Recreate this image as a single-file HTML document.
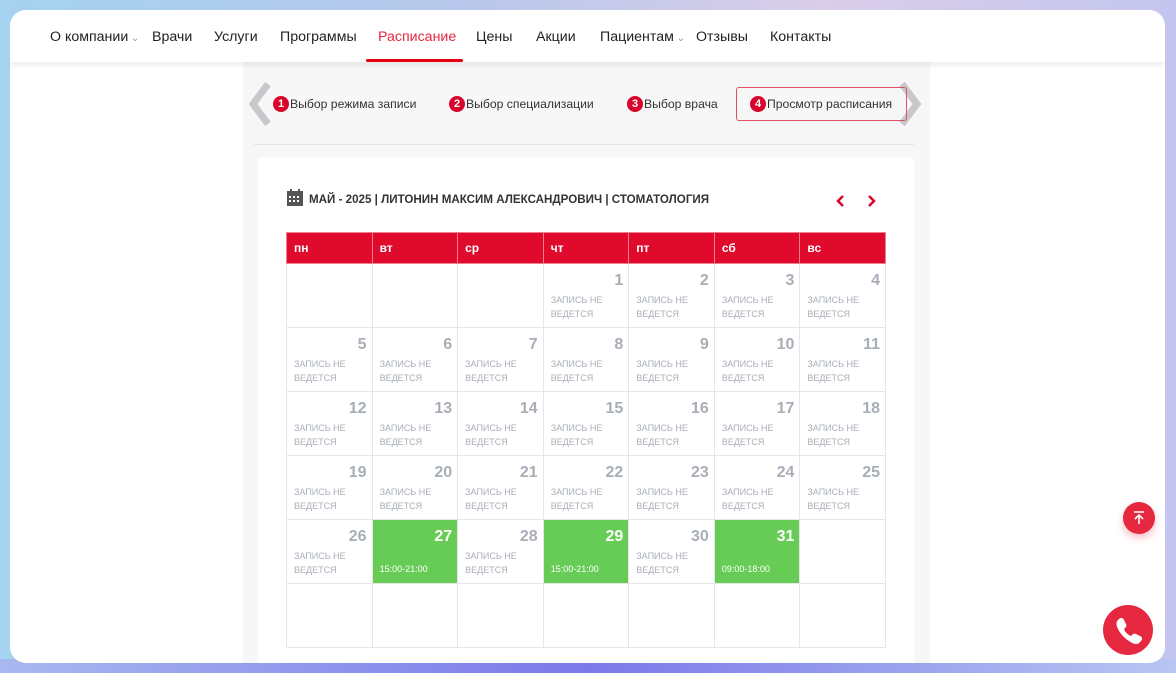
<!DOCTYPE html>
<html><head><meta charset="utf-8"><style>
*{margin:0;padding:0;box-sizing:border-box}
body{width:1176px;height:673px;overflow:hidden;font-family:"Liberation Sans",sans-serif;background:linear-gradient(90deg,#a5d3f0 0%,#b9c8ec 40%,#d9cde8 70%,#c4c6ef 100%);position:relative}
.bot{position:absolute;left:0;right:0;bottom:0;height:14px;background:linear-gradient(90deg,#a9b8f0,#7b78ea 50%,#b8c6f2)}
.frame{position:absolute;left:10px;top:10px;width:1155px;height:653px;background:#fff;border-radius:16px;overflow:hidden}
.nav{position:absolute;left:0;top:0;width:100%;height:52px;background:#fff;box-shadow:0 3px 6px rgba(0,0,0,.08);z-index:2}
.nav span{position:absolute;top:19px;font-size:14.2px;color:#222}
.nav .act{color:#e6283f}
.ul{position:absolute;left:356px;top:49px;width:97px;height:3px;background:#e60012;border-radius:2px}
.gray{position:absolute;left:233px;top:52px;width:687px;height:620px;background:#f7f7f7}
.card{position:absolute;left:248px;top:147px;width:656px;height:520px;background:#fff;border-radius:4px}
.sep{position:absolute;left:244px;top:134px;width:660px;height:1px;background:#e4e4e4}
.step{position:absolute;top:86px;font-size:12.2px;color:#333;line-height:16px}
.num{display:inline-block;width:16px;height:16px;border-radius:50%;background:#d9042b;color:#fff;font-size:11px;font-weight:bold;text-align:center;line-height:16px;margin-right:1px;vertical-align:top}
.box{position:absolute;left:726px;top:77px;width:171px;height:34px;border:1px solid #e05060;border-radius:3px}
table{position:absolute;left:276px;top:222px;border-collapse:collapse;width:600px;table-layout:fixed}
th{background:#df0a2c;color:#fff;height:31px;text-align:left;padding-left:7px;font-size:12px;border:1px solid #f08090}
td{height:64px;border:1px solid #e6e6e6;vertical-align:top;position:relative}
td b{position:absolute;right:5px;top:8px;font-size:16px;color:#a8aeb8}
td i{position:absolute;left:7px;top:30px;font-style:normal;font-size:9px;line-height:13.5px;color:#a8aeb8}
td.g{background:#66cc55}
td.g b{color:#fff}
td.g i{color:#fff;top:43px}
</style></head><body>
<div class="bot"></div>
<div class="frame">
<div class="nav">
<span style="left:40px">О компании<small style="color:#999;font-size:10px"> ⌄</small></span>
<span style="left:142px">Врачи</span>
<span style="left:204px">Услуги</span>
<span style="left:270px">Программы</span>
<span style="left:368px" class="act">Расписание</span>
<span style="left:466px">Цены</span>
<span style="left:526px">Акции</span>
<span style="left:590px">Пациентам<small style="color:#999;font-size:10px"> ⌄</small></span>
<span style="left:686px">Отзывы</span>
<span style="left:760px">Контакты</span>
<div class="ul"></div>
</div>
<div class="gray"></div>
<svg style="position:absolute;left:236px;top:70px" width="30" height="48"><path d="M22 4 L7 24 L22 44" fill="none" stroke="#c8c8cc" stroke-width="7"/></svg>
<svg style="position:absolute;left:884px;top:70px" width="30" height="48"><path d="M8 4 L23 24 L8 44" fill="none" stroke="#c8c8cc" stroke-width="7"/></svg>
<div class="box"></div>
<div class="step" style="left:263px"><span class="num">1</span>Выбор режима записи</div>
<div class="step" style="left:439px"><span class="num">2</span>Выбор специализации</div>
<div class="step" style="left:617px"><span class="num">3</span>Выбор врача</div>
<div class="step" style="left:740px"><span class="num">4</span>Просмотр расписания</div>
<div class="sep"></div>
<div class="card"></div>
<svg style="position:absolute;left:276px;top:179px" width="18" height="18"><rect x="1" y="2" width="16" height="15" fill="#555"/><rect x="4" y="0" width="2" height="4" fill="#555"/><rect x="12" y="0" width="2" height="4" fill="#555"/><g fill="#fff"><rect x="3" y="7" width="2" height="2"/><rect x="7" y="7" width="2" height="2"/><rect x="11" y="7" width="2" height="2"/><rect x="3" y="11" width="2" height="2"/><rect x="7" y="11" width="2" height="2"/><rect x="11" y="11" width="2" height="2"/></g></svg>
<div style="position:absolute;left:299px;top:183px;font-size:11.6px;font-weight:bold;color:#333">МАЙ - 2025 | ЛИТОНИН МАКСИМ АЛЕКСАНДРОВИЧ | СТОМАТОЛОГИЯ</div>
<svg style="position:absolute;left:825px;top:184px" width="50" height="14"><path d="M8 2 L3 7 L8 12 M34 2 L39 7 L34 12" fill="none" stroke="#d9042b" stroke-width="2.5"/></svg>
<table>
<tr><th>пн</th><th>вт</th><th>ср</th><th>чт</th><th>пт</th><th>сб</th><th>вс</th></tr>
<tr><td></td><td></td><td></td>
<td><b>1</b><i>ЗАПИСЬ НЕ<br>ВЕДЕТСЯ</i></td><td><b>2</b><i>ЗАПИСЬ НЕ<br>ВЕДЕТСЯ</i></td><td><b>3</b><i>ЗАПИСЬ НЕ<br>ВЕДЕТСЯ</i></td><td><b>4</b><i>ЗАПИСЬ НЕ<br>ВЕДЕТСЯ</i></td></tr>
<tr><td><b>5</b><i>ЗАПИСЬ НЕ<br>ВЕДЕТСЯ</i></td><td><b>6</b><i>ЗАПИСЬ НЕ<br>ВЕДЕТСЯ</i></td><td><b>7</b><i>ЗАПИСЬ НЕ<br>ВЕДЕТСЯ</i></td><td><b>8</b><i>ЗАПИСЬ НЕ<br>ВЕДЕТСЯ</i></td><td><b>9</b><i>ЗАПИСЬ НЕ<br>ВЕДЕТСЯ</i></td><td><b>10</b><i>ЗАПИСЬ НЕ<br>ВЕДЕТСЯ</i></td><td><b>11</b><i>ЗАПИСЬ НЕ<br>ВЕДЕТСЯ</i></td></tr>
<tr><td><b>12</b><i>ЗАПИСЬ НЕ<br>ВЕДЕТСЯ</i></td><td><b>13</b><i>ЗАПИСЬ НЕ<br>ВЕДЕТСЯ</i></td><td><b>14</b><i>ЗАПИСЬ НЕ<br>ВЕДЕТСЯ</i></td><td><b>15</b><i>ЗАПИСЬ НЕ<br>ВЕДЕТСЯ</i></td><td><b>16</b><i>ЗАПИСЬ НЕ<br>ВЕДЕТСЯ</i></td><td><b>17</b><i>ЗАПИСЬ НЕ<br>ВЕДЕТСЯ</i></td><td><b>18</b><i>ЗАПИСЬ НЕ<br>ВЕДЕТСЯ</i></td></tr>
<tr><td><b>19</b><i>ЗАПИСЬ НЕ<br>ВЕДЕТСЯ</i></td><td><b>20</b><i>ЗАПИСЬ НЕ<br>ВЕДЕТСЯ</i></td><td><b>21</b><i>ЗАПИСЬ НЕ<br>ВЕДЕТСЯ</i></td><td><b>22</b><i>ЗАПИСЬ НЕ<br>ВЕДЕТСЯ</i></td><td><b>23</b><i>ЗАПИСЬ НЕ<br>ВЕДЕТСЯ</i></td><td><b>24</b><i>ЗАПИСЬ НЕ<br>ВЕДЕТСЯ</i></td><td><b>25</b><i>ЗАПИСЬ НЕ<br>ВЕДЕТСЯ</i></td></tr>
<tr><td><b>26</b><i>ЗАПИСЬ НЕ<br>ВЕДЕТСЯ</i></td><td class="g"><b>27</b><i>15:00-21:00</i></td><td><b>28</b><i>ЗАПИСЬ НЕ<br>ВЕДЕТСЯ</i></td><td class="g"><b>29</b><i>15:00-21:00</i></td><td><b>30</b><i>ЗАПИСЬ НЕ<br>ВЕДЕТСЯ</i></td><td class="g"><b>31</b><i>09:00-18:00</i></td><td></td></tr>
<tr><td></td><td></td><td></td><td></td><td></td><td></td><td></td></tr>
</table>
<div style="position:absolute;left:1113px;top:492px;width:32px;height:32px;border-radius:50%;background:#e5283f;box-shadow:0 4px 8px rgba(229,40,63,.3)">
<svg width="32" height="32"><path d="M11 10h10M16 22v-9M12 17l4-4 4 4" fill="none" stroke="#fff" stroke-width="1.6"/></svg></div>
<div style="position:absolute;left:1093px;top:595px;width:50px;height:50px;border-radius:50%;background:#e5283f">
<svg width="50" height="50" viewBox="0 0 50 50"><path d="M16 14c2-2 4-1 5 1l2 4c1 2 0 3-1 4l-1 1c1 3 4 6 7 7l1-1c1-1 2-2 4-1l4 2c2 1 3 3 1 5l-2 2c-2 2-6 1-10-2-5-3-9-8-11-12-2-4-2-7 0-9z" fill="#fff"/></svg></div>
</div>
</body></html>
